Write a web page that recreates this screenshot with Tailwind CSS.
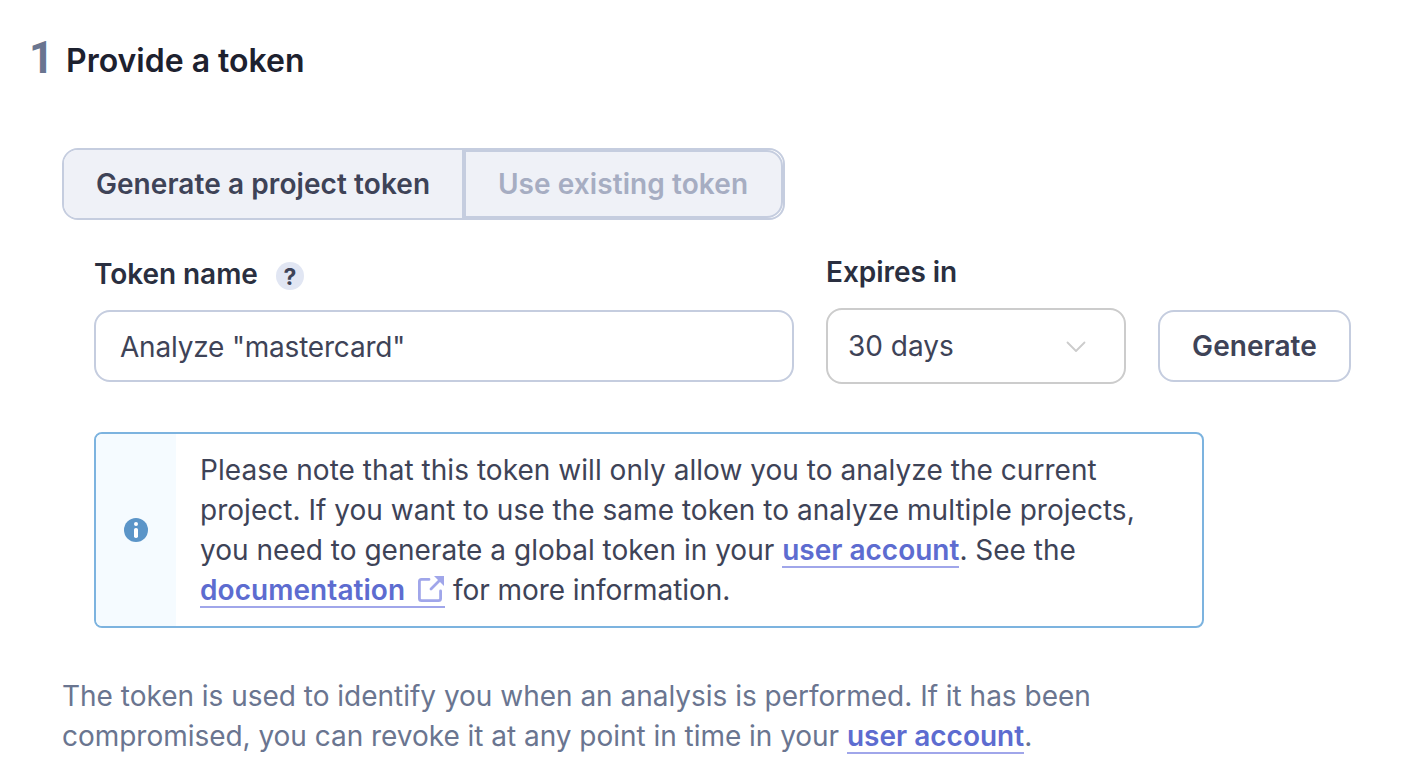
<!DOCTYPE html>
<html lang="en">
<head>
<meta charset="utf-8">
<title>Provide a token</title>
<script src="https://cdn.jsdelivr.net/npm/@tailwindcss/browser@4"></script>
</head>
<body class="h-[782px] w-[1406px] overflow-hidden bg-white font-['Inter',sans-serif] text-[28px] leading-[40px] text-[#3e4357]">
<main class="flex flex-col">
  <h2 class="flex h-[148px] pt-[37px] text-[32px] leading-[48px] font-semibold text-[#1d212f]">
    <span class="w-[66px] pl-[29px] font-['Roboto',sans-serif] text-[43.5px] leading-[44px] font-bold text-[#6a7590]">1</span>
    <span>Provide a token</span>
  </h2>

  <div class="ml-[62px] flex h-[72px] w-[723px] rounded-[16px] border-2 border-[#c5cddf] font-semibold tracking-[0.08px]">
    <button class="h-[68px] w-[398px] rounded-l-[14px] bg-[#eff1f7]">Generate a project token</button>
    <button class="h-[68px] w-[321px] rounded-r-[16px] border-2 border-l-4 border-[#c5cddf] bg-[#eff1f7] pr-px text-[#a6adc2]">Use existing token</button>
  </div>

  <form class="mt-[32px] ml-[94px] flex h-[132px] items-start">
    <div class="w-[700px]">
      <label class="mt-[2px] flex h-[56px] items-start font-semibold tracking-[-0.06px] text-[#2a2f40]">Token name
        <span class="mt-[8px] ml-[18px] flex size-[28px] items-center justify-center rounded-full bg-[#e1e6f3] pt-px text-[23px] leading-[28px] font-bold text-[#3e4357]">?</span>
      </label>
      <div class="flex h-[72px] items-center rounded-[16px] border-2 border-[#c5cddf] pt-[2px] pl-[24px] tracking-[-0.2px]">Analyze "mastercard"</div>
    </div>
    <div class="ml-[32px] w-[300px]">
      <label class="block h-[56px] font-semibold tracking-[-0.06px] text-[#2a2f40]">Expires in</label>
      <div class="flex h-[76px] items-center justify-between rounded-[16px] border-2 border-[#cccccc] pr-[38px] pl-[20px]">30 days
        <svg class="mt-px h-[12px] w-[20px]" viewBox="0 0 20 12" fill="none" stroke="#cccccc" stroke-width="1.800"><path d="M1.500 1.500 10 10 18.500 1.500" stroke-linecap="round" stroke-linejoin="round"/></svg>
      </div>
    </div>
    <button class="mt-[58px] ml-[32px] h-[72px] w-[193px] rounded-[16px] border-2 border-[#c5cddf] font-semibold tracking-[0.06px]">Generate</button>
  </form>

  <section class="mt-[48px] ml-[94px] flex h-[196px] w-[1110px] overflow-hidden rounded-[8px] border-2 border-[#7cb3df]">
    <div class="flex w-[80px] items-center justify-center bg-[#f5fbff]">
      <svg class="size-[24px]" viewBox="0 0 24 24"><circle cx="12" cy="12" r="12" fill="#5b95c8"/><circle cx="12" cy="6" r="2" fill="#fff"/><rect x="10" y="10" width="4" height="10" rx="1.800" fill="#fff"/></svg>
    </div>
    <p class="pt-[16px] pl-[24px] whitespace-nowrap"><span class="tracking-[0.04px]">Please note that this token will only allow you to analyze the current</span><br><span class="tracking-[0.03px]">project. If you want to use the same token to analyze multiple projects,</span><br><span class="tracking-[0.02px]">you need to generate a global token in your </span><a class="inline-block border-b-2 border-[#a0a6ea] leading-[32px] font-semibold text-[#5d6cd0]">user account</a>. See the<br><a class="inline-block border-b-2 border-[#a0a6ea] leading-[32px] font-semibold tracking-[0.06px] text-[#5d6cd0]">documentation<svg class="ml-[12px] inline-block h-[28px] w-[28px] align-[-3px]" viewBox="0 0 28 28" fill="none" stroke="#a0a6ea" stroke-width="2.800"><path d="M12 4.400H4.500A2.100 2.100 0 0 0 2.400 6.500V23.500A2.100 2.100 0 0 0 4.500 25.600H21.500A2.100 2.100 0 0 0 23.600 23.500V16M14 14 23 5" stroke-linecap="round"/><path d="M17 1H27V11Z" fill="#a0a6ea" stroke="none"/></svg></a><span class="tracking-[-0.06px]"> for more information.</span></p>
  </section>

  <p class="mt-[48px] ml-[62px] whitespace-nowrap text-[#6a7590]"><span class="tracking-[-0.015px]">The token is used to identify you when an analysis is performed. If it has been</span><br><span class="tracking-[-0.03px]">compromised, you can revoke it at any point in time in your </span><a class="inline-block border-b-2 border-[#a0a6ea] leading-[32px] font-semibold text-[#5d6cd0]">user account</a>.</p>
</main>
</body>
</html>
